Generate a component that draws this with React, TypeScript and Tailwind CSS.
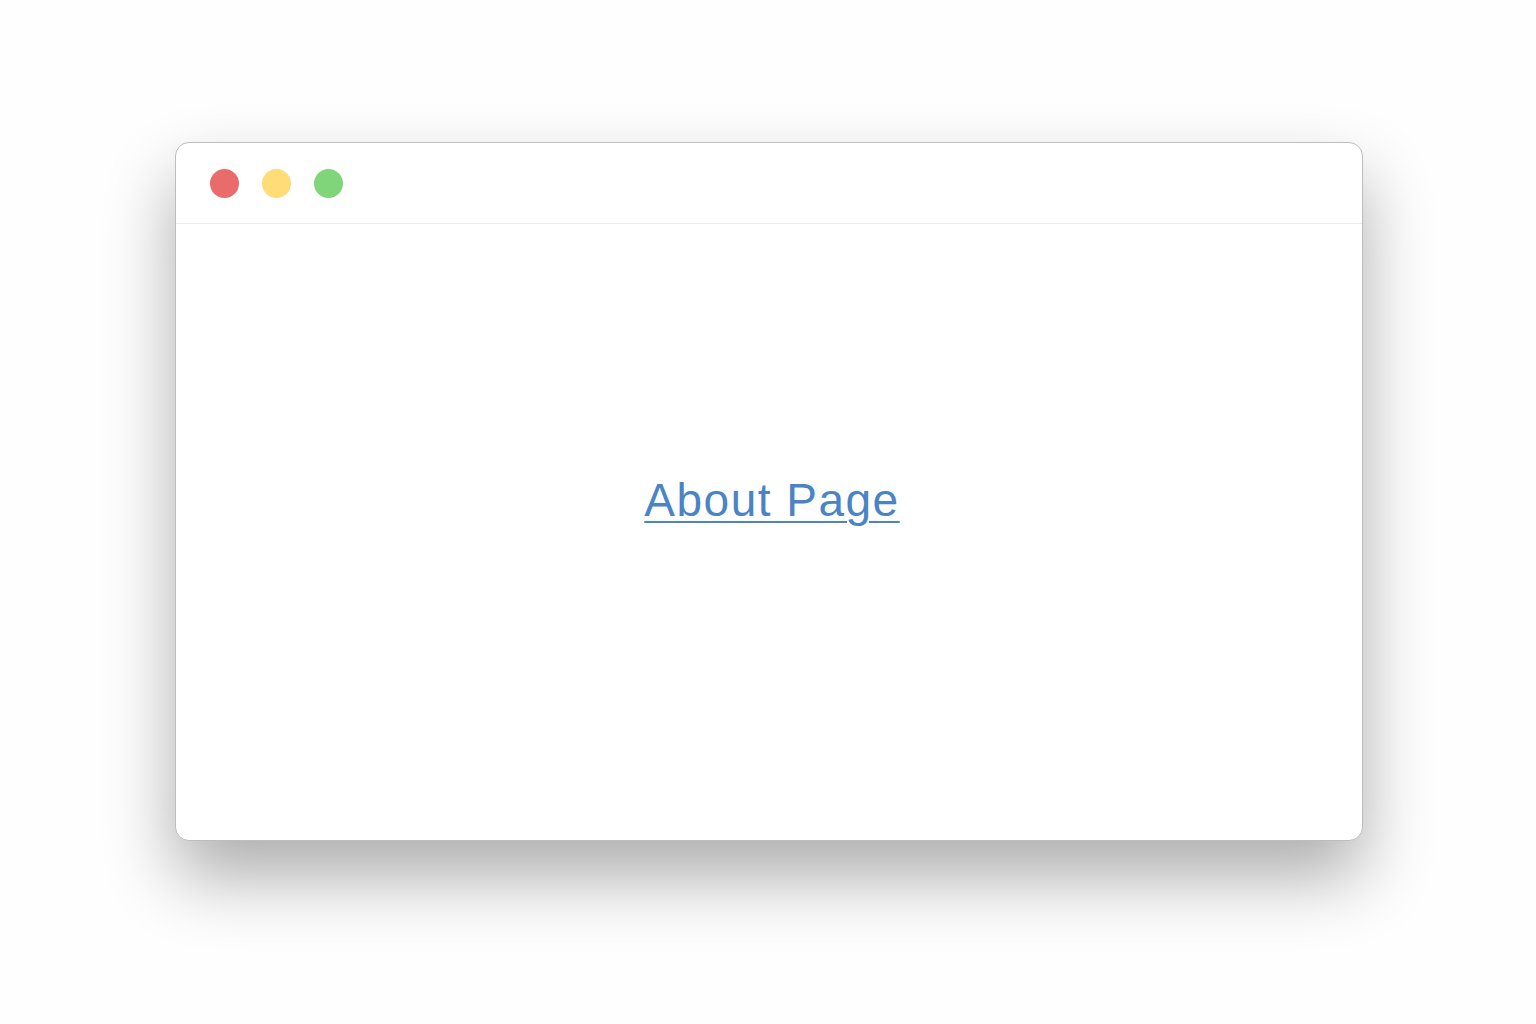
const App: React.FC = () => {
  return (
    <div className="w-[1536px] h-[1024px] bg-[#fefefe] pt-[142px] pl-[175px]" style={{ fontFamily: '"Liberation Sans", Arial, sans-serif' }}>
      <div className="w-[1188px] h-[699px] bg-white rounded-[14px] border border-[#bdbdbd] shadow-[0_36px_70px_rgba(0,0,0,0.32)] flex flex-col overflow-hidden">
        <div className="h-[81px] flex items-center gap-[23px] pl-[34px] border-b border-[#ececec] shrink-0">
          <span className="w-[29px] h-[29px] rounded-full bg-[#ea6b6b]" />
          <span className="w-[29px] h-[29px] rounded-full bg-[#fedc78]" />
          <span className="w-[29px] h-[29px] rounded-full bg-[#7fd577]" />
        </div>
        <div className="flex-1 flex items-center justify-center pb-[64px] pl-[6px]">
          <a href="#" className="text-[46px] leading-none text-[#4a84c4] underline decoration-[2px] underline-offset-[5px] tracking-[1.5px]">
            About Page
          </a>
        </div>
      </div>
    </div>
  );
};

export default App;
